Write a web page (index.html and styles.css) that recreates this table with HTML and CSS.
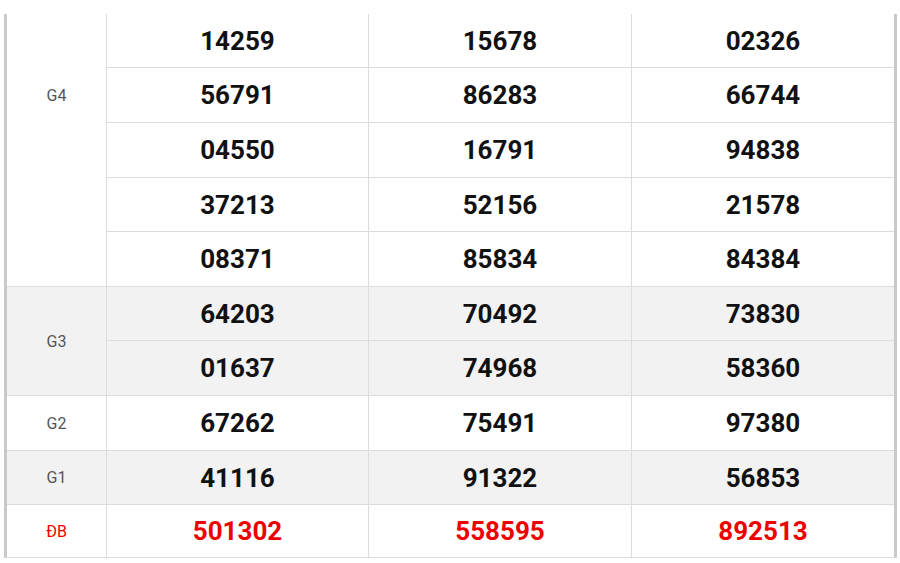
FILE: index.html
```html
<!DOCTYPE html>
<html lang="vi">
<head>
<meta charset="utf-8">
<link rel="stylesheet" href="styles.css">
</head>
<body>
<div class="wrap">
  <div class="results">
    <div class="label span5 top">G4</div>
    <div class="num">14259</div><div class="num">15678</div><div class="num last">02326</div>
    <div class="num">56791</div><div class="num">86283</div><div class="num last">66744</div>
    <div class="num">04550</div><div class="num">16791</div><div class="num last">94838</div>
    <div class="num">37213</div><div class="num">52156</div><div class="num last">21578</div>
    <div class="num">08371</div><div class="num">85834</div><div class="num last">84384</div>

    <div class="label span2 alt">G3</div>
    <div class="num alt">64203</div><div class="num alt">70492</div><div class="num alt last">73830</div>
    <div class="num alt">01637</div><div class="num alt">74968</div><div class="num alt last">58360</div>

    <div class="label">G2</div>
    <div class="num">67262</div><div class="num">75491</div><div class="num last">97380</div>

    <div class="label alt">G1</div>
    <div class="num alt">41116</div><div class="num alt">91322</div><div class="num alt last">56853</div>

    <div class="label special">ĐB</div>
    <div class="num special">501302</div><div class="num special">558595</div><div class="num special last">892513</div>
  </div>
</div>
</body>
</html>
```

FILE: styles.css
```css
html, body {
  margin: 0;
  padding: 0;
  background: #fff;
}

.wrap {
  padding: 14px 3px 0 4px;
}

.results {
  display: grid;
  grid-template-columns: 100px 262px 263px 262px;
  grid-template-rows: 54px 55px 55px 54px 55px 54px 55px 55px 54px 52px;
  border-left: 3px solid #c9c9c9;
  border-right: 3px solid #c9c9c9;
  border-bottom: 1px solid #dcdcdc;
  font-family: Roboto, "Liberation Sans", sans-serif;
}

.label,
.num {
  display: flex;
  align-items: center;
  justify-content: center;
  box-sizing: border-box;
  border-right: 1px solid #dcdcdc;
  border-bottom: 1px solid #dcdcdc;
  background: #fff;
}

.label {
  grid-column: 1;
  font-size: 16px;
  color: #555;
}

.span5 {
  grid-row: span 5;
}

.span2 {
  grid-row: span 2;
}

.top {
  align-items: flex-start;
  padding-top: 72px;
}

.num {
  font-size: 26px;
  font-weight: 700;
  color: #111;
}

.last {
  border-right: none;
}

.alt {
  background: #f2f2f2;
}

.results > div:nth-last-child(-n+4) {
  border-bottom: none;
}

.special {
  color: #ee0000;
}
```
